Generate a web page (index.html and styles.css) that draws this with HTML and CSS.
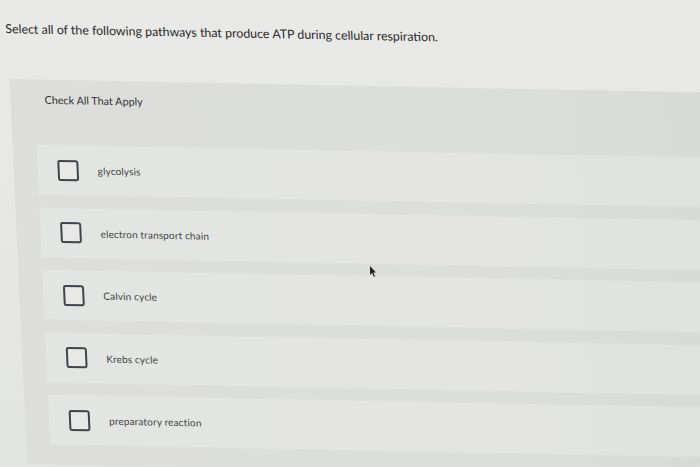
FILE: index.html
```html
<!DOCTYPE html>
<html lang="en">
<head>
<meta charset="utf-8">
<title>Check All That Apply</title>
<link rel="stylesheet" href="styles.css">
</head>
<body>
<div class="sheet">
  <p class="question">Select all of the following pathways that produce ATP during cellular respiration.</p>
  <section class="panel">
    <div class="prompt">Check All That Apply</div>
    <ul class="options">
      <li class="option"><span class="box"></span><span class="label">glycolysis</span></li>
      <li class="option"><span class="box"></span><span class="label">electron transport chain</span></li>
      <li class="option"><span class="box"></span><span class="label">Calvin cycle</span></li>
      <li class="option"><span class="box"></span><span class="label">Krebs cycle</span></li>
      <li class="option"><span class="box"></span><span class="label">preparatory reaction</span></li>
    </ul>
  </section>
</div>
<svg class="cursor" width="8" height="12" viewBox="0 0 8 12"><path d="M1 0 L1 9 L3 7 L5 11 L6 10.5 L4.3 6.6 L7 6.4 Z" fill="#222"/></svg>
</body>
</html>
```
FILE: styles.css
```css
html, body {
  margin: 0;
  padding: 0;
  height: 100%;
  overflow: hidden;
}
body {
  background: linear-gradient(180deg, #e9e9e7 0%, #e6e7e5 60%, #e2e4e1 100%);
  font-family: Lato, "Open Sans", sans-serif;
  position: relative;
}
.sheet {
  width: 760px;
  transform-origin: 0 0;
  transform: skew(2.6deg, 1.1deg);
}
.question {
  margin: 0;
  padding: 21px 0 0 4px;
  font-size: 12.4px;
  line-height: 16px;
  color: #2b2b2b;
}
.panel {
  margin: 42px 0 0 6px;
  padding: 13px 0 12px 24px;
  background: linear-gradient(90deg, #dddedc 0%, #dcdedb 60%, #d6d9d5 100%);
  height: 360px;
  box-sizing: content-box;
}
.prompt {
  padding-left: 10px;
  font-size: 10.8px;
  line-height: 14px;
  color: #333;
}
.options {
  list-style: none;
  margin: 38px 0 0 0;
  padding: 0;
  display: flex;
  flex-direction: column;
  gap: 12.5px;
}
.option {
  height: 50px;
  display: flex;
  align-items: center;
  padding-left: 20px;
  background: linear-gradient(90deg, #e3e5e2 0%, #e4e5e3 60%, #dee1dd 100%);
}
.box {
  width: 17px;
  height: 17px;
  border: 2px solid #40454c;
  border-radius: 2.5px;
  background: #e8e9e7;
  flex: none;
}
.label {
  margin-left: 19px;
  font-size: 10px;
  letter-spacing: 0.15px;
  color: #444;
}
.cursor {
  position: absolute;
  left: 369px;
  top: 266px;
}
```
